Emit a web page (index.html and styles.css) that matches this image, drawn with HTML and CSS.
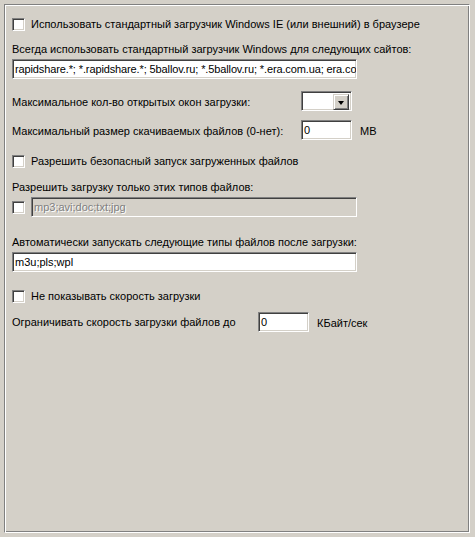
FILE: index.html
```html
<!DOCTYPE html>
<html>
<head>
<meta charset="utf-8">
<link rel="stylesheet" href="styles.css">
</head>
<body>
<div class="frame">
  <div class="row r1">
    <span class="chk"></span>
    <span class="lbl">Использовать стандартный загрузчик Windows IE (или внешний) в браузере</span>
  </div>
  <div class="text t2">Всегда использовать стандартный загрузчик Windows для следующих сайтов:</div>
  <div class="field wide i1">rapidshare.*; *.rapidshare.*; 5ballov.ru; *.5ballov.ru; *.era.com.ua; era.co</div>
  <div class="row r3">
    <span class="lbl w289">Максимальное кол-во открытых окон загрузки:</span>
    <span class="combo"><span class="btn"><span class="tri"></span></span></span>
  </div>
  <div class="row r4">
    <span class="lbl w289">Максимальный размер скачиваемых файлов (0-нет):</span>
    <span class="field small">0</span>
    <span class="unit">MB</span>
  </div>
  <div class="row r5">
    <span class="chk"></span>
    <span class="lbl">Разрешить безопасный запуск загруженных файлов</span>
  </div>
  <div class="text t6">Разрешить загрузку только этих типов файлов:</div>
  <div class="row r7">
    <span class="chk"></span>
    <span class="field dis">mp3;avi;doc;txt;jpg</span>
  </div>
  <div class="text t8">Автоматически запускать следующие типы файлов после загрузки:</div>
  <div class="field wide i9">m3u;pls;wpl</div>
  <div class="row r10">
    <span class="chk"></span>
    <span class="lbl">Не показывать скорость загрузки</span>
  </div>
  <div class="row r11">
    <span class="lbl w246">Ограничивать скорость загрузки файлов до</span>
    <span class="field small">0</span>
    <span class="unit">КБайт/сек</span>
  </div>
</div>
</body>
</html>
```
FILE: styles.css
```css
html, body {
  margin: 0;
  padding: 0;
  background: #d4d0c8;
}
body {
  width: 475px;
  height: 537px;
  overflow: hidden;
  font-family: "Liberation Sans", Arial, sans-serif;
  font-size: 11px;
  color: #000;
}
.frame {
  box-sizing: border-box;
  margin: 4px 0 0 4px;
  width: 466px;
  height: 529px;
  border-top: 1px solid #808080;
  border-left: 1px solid #808080;
  border-right: 1px solid #ffffff;
  border-bottom: 1px solid #ffffff;
  box-shadow: inset 1px 1px 0 #ffffff, inset -1px -1px 0 #808080;
  padding: 0 0 0 7px;
  display: flex;
  flex-direction: column;
  align-items: flex-start;
}
.row {
  display: flex;
  align-items: center;
  white-space: nowrap;
}
.text {
  height: 13px;
  line-height: 13px;
  white-space: nowrap;
}
.lbl {
  line-height: 13px;
  white-space: nowrap;
}
.chk {
  box-sizing: border-box;
  width: 13px;
  height: 13px;
  flex: none;
  background: #fff;
  border-top: 1px solid #808080;
  border-left: 1px solid #808080;
  border-right: 1px solid #ffffff;
  border-bottom: 1px solid #ffffff;
  box-shadow: inset 1px 1px 0 #404040, inset -1px -1px 0 #d4d0c8;
  margin-right: 6px;
}
.field {
  box-sizing: border-box;
  height: 20px;
  background: #fff;
  border-top: 1px solid #808080;
  border-left: 1px solid #808080;
  border-right: 1px solid #ffffff;
  border-bottom: 1px solid #ffffff;
  box-shadow: inset 1px 1px 0 #404040, inset -1px -1px 0 #d4d0c8;
  padding: 0 2px;
  line-height: 18px;
  white-space: nowrap;
  overflow: hidden;
  flex: none;
}
.wide { width: 345px; }
.i1 { letter-spacing: -0.12px; }
.small { width: 51px; }
.dis {
  width: 326px;
  background: #d4d0c8;
  color: #808080;
  text-shadow: 1px 1px 0 #fff;
}
.w289 { width: 289px; flex: none; padding-top: 5px; }
.w246 { width: 246px; flex: none; }
.unit { margin-left: 8px; padding-top: 1px; }
.combo {
  box-sizing: border-box;
  width: 51px;
  height: 20px;
  background: #fff;
  border-top: 1px solid #808080;
  border-left: 1px solid #808080;
  border-right: 1px solid #ffffff;
  border-bottom: 1px solid #ffffff;
  box-shadow: inset 1px 1px 0 #404040, inset -1px -1px 0 #d4d0c8;
  padding: 2px 2px 2px 0;
  display: flex;
  justify-content: flex-end;
  flex: none;
}
.btn {
  box-sizing: border-box;
  width: 16px;
  height: 16px;
  background: #d4d0c8;
  border-top: 1px solid #d4d0c8;
  border-left: 1px solid #d4d0c8;
  border-right: 1px solid #404040;
  border-bottom: 1px solid #404040;
  box-shadow: inset 1px 1px 0 #ffffff, inset -1px -1px 0 #808080;
  display: flex;
  align-items: center;
  justify-content: center;
}
.tri {
  width: 0;
  height: 0;
  border-left: 3.5px solid transparent;
  border-right: 3.5px solid transparent;
  border-top: 4px solid #000;
  margin-top: 1px;
}
.r1 { margin-top: 13px; }
.t2 { margin-top: 12px; }
.i1 { margin-top: 3px; }
.r3 { margin-top: 12px; height: 20px; align-items: flex-start; }
.r4 { margin-top: 9px; height: 20px; }
.r4 .w289 { padding-top: 2px; }
.r5 { margin-top: 15px; }
.t6 { margin-top: 13px; }
.r7 { margin-top: 3px; height: 20px; }
.t8 { margin-top: 19px; }
.i9 { margin-top: 3px; }
.r10 { margin-top: 18px; }
.r11 { margin-top: 9px; height: 20px; }
.r11 .w246 { padding-top: 1px; }
```
